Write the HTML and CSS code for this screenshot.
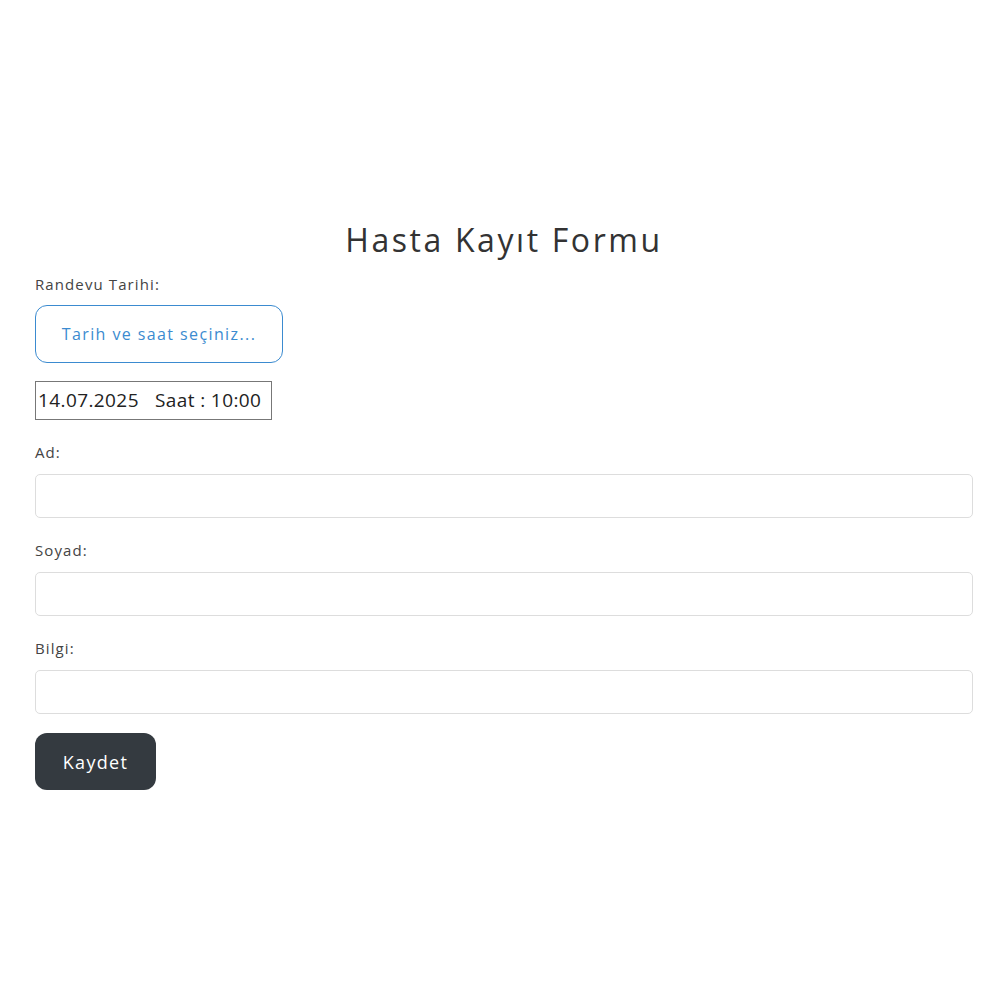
FILE: index.html
```html
<!DOCTYPE html>
<html lang="tr">
<head>
    <meta charset="UTF-8">
    <meta name="viewport" content="width=device-width, initial-scale=1.0">
    <title>Hasta Kayıt Formu</title>
    <link rel="stylesheet" href="styles.css">
</head>
<body>
    <div class="container">
        <h1 class="title">Hasta Kayıt Formu</h1>

        <form class="patient-form" onsubmit="return false;">
            <label class="field-label">Randevu Tarihi:</label>
            <button type="button" class="date-btn">Tarih ve saat seçiniz...</button>
            <div class="date-display">14.07.2025   Saat : 10:00</div>

            <div class="field">
                <label class="field-label" for="ad">Ad:</label>
                <input class="field-input" type="text" id="ad">
            </div>

            <div class="field">
                <label class="field-label" for="soyad">Soyad:</label>
                <input class="field-input" type="text" id="soyad">
            </div>

            <div class="field">
                <label class="field-label" for="bilgi">Bilgi:</label>
                <input class="field-input" type="text" id="bilgi">
            </div>

            <button type="submit" class="save-btn">Kaydet</button>
        </form>
    </div>
</body>
</html>
```

FILE: styles.css
```css
* {
    margin: 0;
    padding: 0;
    box-sizing: border-box;
}

body {
    font-family: "Open Sans", Lato, sans-serif;
    background: #fff;
    color: #333;
}

.container {
    padding: 220px 27px 0 35px;
}

.title {
    font-size: 32px;
    font-weight: 400;
    line-height: 40px;
    letter-spacing: 2.6px;
    text-align: center;
    color: #333;
    margin-bottom: 14px;
}

.field-label {
    display: block;
    font-size: 15px;
    line-height: 20px;
    letter-spacing: 1.1px;
    color: #444;
    margin-bottom: 11px;
}

.date-btn {
    display: block;
    width: 248px;
    height: 58px;
    font-family: inherit;
    font-size: 16px;
    letter-spacing: 1.4px;
    color: #3b8bd0;
    background: #fff;
    border: 1px solid #3b8bd0;
    border-radius: 12px;
    cursor: pointer;
}

.date-display {
    display: inline-block;
    margin-top: 18px;
    width: 237px;
    height: 39px;
    padding: 0 2px;
    font-size: 19px;
    line-height: 37px;
    letter-spacing: 0.4px;
    color: #222;
    border: 1px solid #777;
    white-space: pre;
}

.field {
    margin-top: 22px;
}

.field .field-label {
    margin-bottom: 12px;
}

.field-input {
    display: block;
    width: 100%;
    height: 44px;
    padding: 0 12px;
    font-family: inherit;
    font-size: 16px;
    border: 1px solid #ddd;
    border-radius: 5px;
}

.save-btn {
    display: block;
    margin-top: 19px;
    width: 121px;
    height: 57px;
    font-family: inherit;
    font-size: 18px;
    letter-spacing: 1.3px;
    color: #fff;
    background: #343a40;
    border: none;
    border-radius: 12px;
    cursor: pointer;
}
```
